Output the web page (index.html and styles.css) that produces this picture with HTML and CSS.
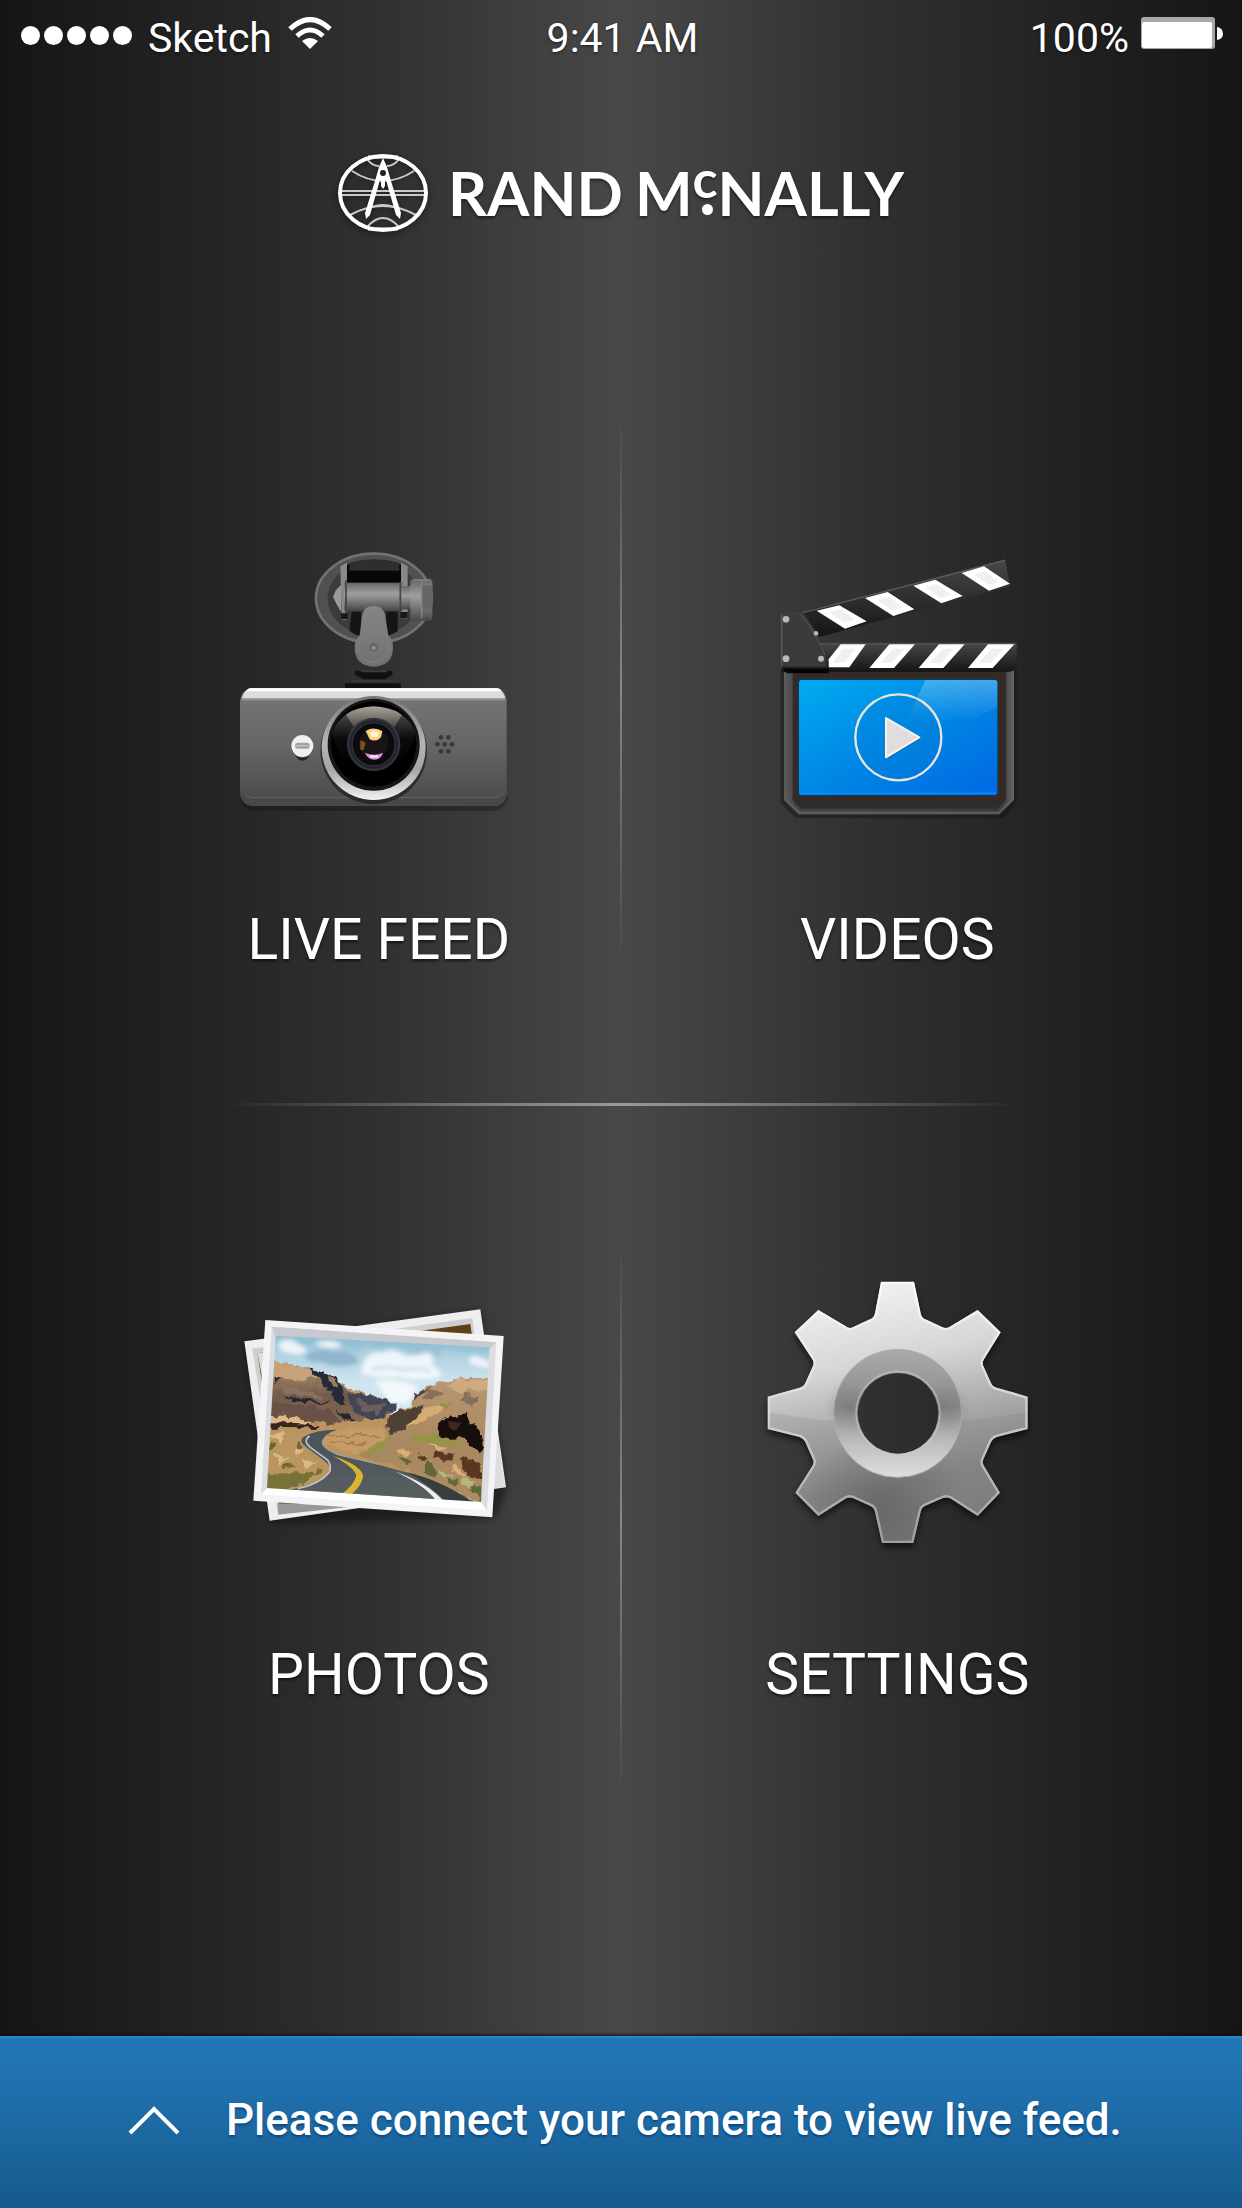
FILE: index.html
```html
<!DOCTYPE html>
<html lang="en">
<head>
    <meta charset="UTF-8">
    <meta name="viewport" content="width=device-width, initial-scale=1.0">
    <title>Rand McNally Dash Cam</title>
    <link rel="stylesheet" href="styles.css">
</head>
<body>
    <div class="status-bar">
        <div class="carrier">
            <div class="signal">
                <span></span><span></span><span></span><span></span><span></span>
            </div>
            <span>Sketch</span>
            <svg class="wifi" viewBox="0 0 44 32" aria-hidden="true">
                <path d="M2 12 Q22 -7 42 12" fill="none" stroke="#fff" stroke-width="5"/>
                <path d="M9 19 Q22 7 35 19" fill="none" stroke="#fff" stroke-width="5"/>
                <path d="M14 24 Q22 18 30 24 L22 32 Z" fill="#fff"/>
            </svg>
        </div>
        <div class="time">9:41 AM</div>
        <div class="battery">
            <span>100%</span>
            <svg viewBox="0 0 84 34" aria-hidden="true">
                <rect x="1" y="1" width="74" height="32" rx="3" fill="#a8a8a8"/>
                <rect x="2" y="6" width="70" height="26" rx="2" fill="#fff"/>
                <path d="M77 11 Q83 12 83 18 Q83 23 77 24 Z" fill="#fff"/>
            </svg>
        </div>
    </div>

    <header class="header">
        <svg class="globe" viewBox="0 0 90 80" aria-hidden="true">
            <g fill="none" stroke="#fff">
                <ellipse cx="45" cy="40" rx="43" ry="37" stroke-width="4"/>
                <g stroke-width="2" opacity="0.75">
                    <path d="M2 38 H88 M2 42 H88"/>
                    <path d="M14 18 Q45 38 76 18"/>
                    <path d="M29 6 Q34 13 41 13 M61 6 Q56 13 49 13"/>
                    <path d="M12 62 Q45 44 78 62"/>
                    <path d="M29 74 Q45 56 61 74"/>
                    <path d="M34 54 Q45 50 56 54"/>
                </g>
                <path d="M30 4 H60 M30 76 H60" stroke-width="3"/>
            </g>
            <path d="M45 5 L49 14 L53 28 L63 60 L62 66 L58 62 L48 27 L42 27 L32 62 L28 66 L27 60 L37 28 L41 14 Z" fill="#fff"/>
            <path d="M43 25 H47 V33 L45 36 L43 33 Z" fill="#fff"/>
            <circle cx="45" cy="20" r="3" fill="#222"/>
        </svg>
        <h1 class="brand"><span>RAND</span> <span class="mc">M<span class="small-c">c</span>NALLY</span></h1>
    </header>

    <main class="menu">
        <a class="item left" href="#live">
            <svg class="icon" viewBox="9 0 930 900" aria-hidden="true">
                <defs>
                    <linearGradient id="body" x1="0" y1="0" x2="0" y2="1">
                        <stop offset="0" stop-color="#777"/>
                        <stop offset="0.5" stop-color="#656565"/>
                        <stop offset="1" stop-color="#484848"/>
                    </linearGradient>
                    <linearGradient id="barrel" x1="0" y1="0" x2="0" y2="1">
                        <stop offset="0" stop-color="#666"/>
                        <stop offset="0.4" stop-color="#a0a0a0"/>
                        <stop offset="1" stop-color="#484848"/>
                    </linearGradient>
                    <linearGradient id="arm" x1="0" y1="0" x2="0" y2="1">
                        <stop offset="0" stop-color="#858585"/>
                        <stop offset="1" stop-color="#707070"/>
                    </linearGradient>
                    <linearGradient id="bezel" x1="0" y1="0" x2="0" y2="1">
                        <stop offset="0" stop-color="#777"/>
                        <stop offset="0.45" stop-color="#b5b5b5"/>
                        <stop offset="0.7" stop-color="#a5a5a8"/>
                        <stop offset="1" stop-color="#f4f0f2"/>
                    </linearGradient>
                    <linearGradient id="glass" x1="0" y1="0" x2="0" y2="1">
                        <stop offset="0" stop-color="#aaa69a"/>
                        <stop offset="0.35" stop-color="#55534e"/>
                        <stop offset="0.6" stop-color="#111"/>
                        <stop offset="1" stop-color="#000"/>
                    </linearGradient>
                    <radialGradient id="iris">
                        <stop offset="0" stop-color="#101018"/>
                        <stop offset="0.8" stop-color="#14141a"/>
                        <stop offset="1" stop-color="#3a3c46"/>
                    </radialGradient>
                </defs>
                <!-- suction mount -->
                <ellipse cx="458" cy="205" rx="173" ry="134" fill="#505050" stroke="#727272" stroke-width="8"/>
                <ellipse cx="458" cy="205" rx="138" ry="112" fill="#3b3b3b"/>
                <path d="M375 105 Q458 78 545 105 V165 H375 Z" fill="#070707"/>
                <path d="M385 98 Q458 78 535 98 V122 H385 Z" fill="#2e2e2e"/>
                <path d="M358 108 L378 98 V270 H362 Z M540 98 L560 108 V265 H540 Z" fill="#888"/>
                <path d="M345 180 L360 165 V245 L345 220 L336 200 Z" fill="#999"/>
                <rect x="370" y="158" width="175" height="84" fill="url(#barrel)"/>
                <rect x="540" y="168" width="32" height="70" fill="url(#barrel)"/>
                <rect x="568" y="148" width="66" height="124" rx="8" fill="url(#barrel)"/>
                <path d="M600 166 H634 V238 H600 Z" fill="#666"/>
                <path d="M602 154 V264 M578 150 H628" stroke="#858585" stroke-width="4"/>
                <path d="M375 150 V255 M538 155 V255" stroke="#444" stroke-width="5"/>
                <path d="M360 250 H380 V268 H360 Z M538 246 H560 V264 H538 Z" fill="#181818"/>
                <path d="M392 245 H420 V320 Q400 314 385 302 Z M496 245 H530 V304 Q510 315 496 320 Z" fill="#151515"/>
                <path d="M422 268 Q424 228 458 228 Q492 228 494 268 L502 315 Q516 330 516 352 Q516 408 458 410 Q401 408 401 352 Q401 330 416 315 Z" fill="url(#arm)"/>
                <circle cx="458" cy="352" r="46" fill="none" stroke="#808080" stroke-width="3"/>
                <circle cx="458" cy="352" r="13" fill="#666"/>
                <circle cx="458" cy="354" r="6" fill="#919191"/>
                <path d="M402 422 H514 V434 L492 448 H428 L402 434 Z M372 460 H540 V476 H372 Z" fill="#111"/>
                <path d="M420 424 H498 M395 454 H520" stroke="#3b3b3b" stroke-width="6"/>
                <!-- camera body -->
                <path d="M56 800 Q65 845 105 843 H815 Q850 843 862 800 Z" fill="#141414" opacity="0.4"/>
                <path d="M90 474 H826 Q857 482 857 516 V790 Q850 828 818 828 H98 Q65 828 57 790 V516 Q60 480 90 474 Z" fill="url(#body)"/>
                <path d="M90 474 H826 Q850 480 853 510 H62 Q66 480 90 474 Z" fill="#ddd"/>
                <path d="M84 475 H832 Q838 476 842 484 H74 Z" fill="#fff"/>
                <path d="M62 508 H852" stroke="#8d8d8d" stroke-width="7"/>
                <path d="M57 784 Q75 802 105 802 H818 Q842 800 857 784 V795 Q850 829 818 828 H98 Q65 828 57 795 Z" fill="#484848"/>
                <path d="M72 796 Q85 804 108 803 H812 Q836 803 848 792" fill="none" stroke="#666" stroke-width="3"/>
                <circle cx="458" cy="662" r="160" fill="#141414" opacity="0.6"/>
                <circle cx="458" cy="654" r="156" fill="url(#bezel)"/>
                <circle cx="458" cy="644" r="138" fill="#161616"/>
                <circle cx="458" cy="642" r="128" fill="#000"/>
                <path d="M334 608 Q362 533 458 529 Q554 533 584 608 Q570 670 530 690 H390 Q344 670 334 608 Z" fill="url(#glass)"/>
                <path d="M334 608 Q342 570 372 550 L430 640 L390 700 Q340 680 334 608 Z M584 608 Q576 570 546 550 L490 640 L525 700 Q577 680 584 608 Z" fill="#050506" opacity="0.5"/>
                <circle cx="458" cy="643" r="80" fill="url(#iris)"/>
                <circle cx="458" cy="643" r="65" fill="#0b0b0e" stroke="#303440" stroke-width="4"/>
                <circle cx="458" cy="640" r="44" fill="#181417"/>
                <path d="M434 603 Q460 588 484 604 L480 622 Q466 638 446 628 Z" fill="#ffd27a"/>
                <path d="M446 608 Q461 600 474 608 L470 621 H452 Z" fill="#fff4cf"/>
                <path d="M418 630 L434 638 L428 660 H418 Z" fill="#805020"/>
                <path d="M432 668 Q460 680 486 668 Q480 688 460 689 Q440 688 432 668 Z" fill="#d68ae0"/>
                <path d="M446 676 H472 V683 H448 Z" fill="#ffdcff"/>
                <!-- badge and speaker -->
                <path d="M211 650 A33 33 0 0 0 277 650 Q264 692 244 692 Q224 692 211 650 Z" fill="#222"/>
                <circle cx="244" cy="648" r="33" fill="#f0f0f0"/>
                <rect x="222" y="638" width="44" height="18" rx="9" fill="#a3a3a3"/>
                <path d="M226 647 H262" stroke="#ccc" stroke-width="3"/>
                <g fill="#383838">
                    <circle cx="660" cy="622" r="7"/><circle cx="682" cy="622" r="7"/>
                    <circle cx="649" cy="643" r="7"/><circle cx="671" cy="643" r="7"/><circle cx="693" cy="643" r="7"/>
                    <circle cx="660" cy="664" r="7"/><circle cx="682" cy="664" r="7"/>
                </g>
            </svg>
            <span class="label">LIVE FEED</span>
        </a>

        <a class="item right" href="#videos">
            <svg class="icon" viewBox="-54 -30 930 900" aria-hidden="true">
                <defs>
                    <linearGradient id="screen" x1="0" y1="0" x2="1" y2="1">
                        <stop offset="0" stop-color="#00abf0"/>
                        <stop offset="0.5" stop-color="#0087e4"/>
                        <stop offset="1" stop-color="#0068e2"/>
                    </linearGradient>
                    <linearGradient id="frame" x1="0" y1="0" x2="1" y2="0">
                        <stop offset="0" stop-color="#5c5c5c"/>
                        <stop offset="0.05" stop-color="#454545"/>
                        <stop offset="0.95" stop-color="#3c3c3c"/>
                        <stop offset="1" stop-color="#666"/>
                    </linearGradient>
                    <linearGradient id="stick" x1="0" y1="0" x2="0" y2="1">
                        <stop offset="0" stop-color="#484848"/>
                        <stop offset="1" stop-color="#151515"/>
                    </linearGradient>
                    <linearGradient id="glare" x1="0" y1="0" x2="0" y2="1">
                        <stop offset="0" stop-color="#fff" stop-opacity="0.26"/>
                        <stop offset="0.5" stop-color="#fff" stop-opacity="0"/>
                    </linearGradient>
                </defs>
                <path d="M62 388 H770 V790 L730 835 H108 L62 790 Z" fill="#111" opacity="0.45"/>
                <path d="M72 385 H762 V780 L718 824 H116 L72 780 Z" fill="url(#frame)"/>
                <path d="M76 778 L118 818 H716 L758 778" fill="none" stroke="#606060" stroke-width="6"/>
                <path d="M98 395 H738 V780 L712 806 H122 L98 780 Z" fill="#2f2d2c"/>
                <rect x="104" y="404" width="624" height="378" rx="12" fill="#3d261c"/>
                <rect x="112" y="414" width="604" height="356" rx="8" fill="#12394f"/>
                <rect x="117" y="420" width="595" height="345" rx="8" fill="url(#screen)"/>
                <path d="M496 420 H705 Q712 420 712 428 V500 L380 670 Z" fill="url(#glare)"/>
                <path d="M120 760 H708" stroke="#008cff" stroke-width="5"/>
                <circle cx="415" cy="594" r="128" fill="#0077cc" fill-opacity="0.2"/>
                <circle cx="415" cy="592" r="129" fill="none" stroke="#e9e5df" stroke-width="7"/>
                <path d="M376 538 L482 596 L376 660 Z" fill="#074d92" opacity="0.5"/>
                <path d="M378 534 L478 592 L378 652 Z" fill="#dedede" stroke="#fff0e0" stroke-width="6" stroke-linejoin="round"/>
                <!-- upper stick -->
                <path d="M128 215 L735 58 L750 138 L180 290 Z" fill="url(#stick)"/>
                <path d="M128 218 L735 62" stroke="#5c5c5c" stroke-width="4"/>
                <g fill="#fff">
                    <path d="M170 212 L238 196 L320 244 L255 266 Z"/>
                    <path d="M315 174 L383 156 L463 208 L400 228 Z"/>
                    <path d="M460 137 L526 119 L608 168 L544 190 Z"/>
                    <path d="M605 99 L672 79 L750 131 L687 152 Z"/>
                </g>
                <g fill="#f0f0f0">
                    <path d="M208 216 L242 207 L284 239 L252 248 Z"/>
                    <path d="M352 180 L386 170 L430 202 L398 212 Z"/>
                    <path d="M496 142 L530 132 L574 164 L542 174 Z"/>
                    <path d="M642 103 L675 94 L718 126 L686 136 Z"/>
                </g>
                <!-- lower stick -->
                <path d="M66 308 H770 V384 Q760 396 738 396 H66 Z" fill="url(#stick)"/>
                <path d="M180 312 H768" stroke="#505050" stroke-width="4"/>
                <g fill="#fff">
                    <path d="M242 313 H317 L268 382 H206 V358 Z"/>
                    <path d="M388 313 H465 L402 384 H328 Z"/>
                    <path d="M537 313 H614 L550 384 H476 Z"/>
                    <path d="M684 313 H763 L698 384 H624 Z"/>
                </g>
                <g fill="#f0f0f0">
                    <path d="M248 326 H284 L254 368 H218 Z"/>
                    <path d="M400 326 H434 L396 368 H360 Z"/>
                    <path d="M548 326 H582 L544 368 H508 Z"/>
                    <path d="M696 326 H730 L692 368 H656 Z"/>
                </g>
                <!-- hinge plate -->
                <path d="M62 220 Q62 214 70 214 L116 217 Q140 228 198 345 V380 H62 Z" fill="#3b3b3b"/>
                <path d="M65 222 V378" stroke="#595959" stroke-width="5"/>
                <path d="M116 219 Q138 228 194 342" fill="none" stroke="#505050" stroke-width="4"/>
                <g fill="#b8b8b8">
                    <circle cx="78" cy="238" r="10"/><circle cx="78" cy="356" r="10"/>
                    <circle cx="183" cy="356" r="9"/><circle cx="168" cy="280" r="7"/>
                </g>
                <path d="M70 386 H206 V400 H80 Z" fill="#050505"/>
            </svg>
            <span class="label">VIDEOS</span>
        </a>

        <a class="item left" href="#photos">
            <svg class="icon" viewBox="-21 -75 930 900" aria-hidden="true">
                <defs>
                    <linearGradient id="sky" x1="0" y1="0" x2="0" y2="1">
                        <stop offset="0" stop-color="#94c0d4"/>
                        <stop offset="0.3" stop-color="#cfe4ee"/>
                        <stop offset="1" stop-color="#e8f3f8"/>
                    </linearGradient>
                    <linearGradient id="cliff" x1="0" y1="0" x2="0" y2="1">
                        <stop offset="0" stop-color="#bd9a72"/>
                        <stop offset="0.5" stop-color="#705a4c"/>
                        <stop offset="1" stop-color="#8a6c55"/>
                    </linearGradient>
                    <linearGradient id="hill" x1="0" y1="0" x2="0" y2="1">
                        <stop offset="0" stop-color="#b89873"/>
                        <stop offset="0.5" stop-color="#a9875f"/>
                        <stop offset="1" stop-color="#b08d62"/>
                    </linearGradient>
                    <linearGradient id="road" x1="0" y1="0" x2="0" y2="1">
                        <stop offset="0" stop-color="#48525c"/>
                        <stop offset="1" stop-color="#5b605f"/>
                    </linearGradient>
                    <clipPath id="photo"><path d="M134 137 L776 172 L750 636 L108 594 Z"/></clipPath>
                    <filter id="soft"><feGaussianBlur stdDeviation="9"/></filter>
                    <filter id="cloud"><feGaussianBlur stdDeviation="7"/></filter>
                    <filter id="rough">
                        <feTurbulence type="fractalNoise" baseFrequency="0.035" numOctaves="3" seed="4" result="noise"/>
                        <feDisplacementMap in="SourceGraphic" in2="noise" scale="30" xChannelSelector="R" yChannelSelector="G"/>
                        <feGaussianBlur stdDeviation="2"/>
                    </filter>
                    <filter id="grain"><feGaussianBlur stdDeviation="2"/></filter>
                </defs>
                <path d="M38 156 L750 60 L828 598 L790 686 L118 698 Z" fill="#000" opacity="0.4" filter="url(#soft)"/>
                <!-- print underneath -->
                <path d="M40 154 L748 58 L825 592 L116 692 Z" fill="#eee"/>
                <path d="M64 176 L724 84 L796 570 L140 668 Z" fill="#cfcfd2"/>
                <path d="M80 190 L718 102 L784 560 L145 650 Z" fill="#604018"/>
                <path d="M80 190 L600 118 L400 150 L100 300 Z" fill="#ddd"/>
                <path d="M140 640 L380 648 L142 674 Z" fill="#999"/>
                <path d="M760 430 L800 440 L822 590 L776 596 Z" fill="#ddd"/>
                <!-- top print -->
                <path d="M103 90 L818 138 L784 682 L67 632 Z" fill="#f4f4f6"/>
                <path d="M122 110 L796 157 L768 662 L90 614 Z" fill="#dcdde2"/>
                <path d="M122 110 L796 157 L776 175 L134 140 Z" fill="#c8c9ce"/>
                <path d="M90 614 L768 662 L750 636 L108 594 Z" fill="#fff"/>
                <g clip-path="url(#photo)">
                    <rect x="90" y="120" width="710" height="530" fill="url(#sky)"/>
                    <g filter="url(#cloud)">
                        <path d="M130 135 H780 V190 Q700 196 640 176 L610 210 Q550 190 500 174 Q440 180 400 165 L380 190 Q340 160 270 168 Q200 178 130 150 Z" fill="#75aecb" opacity="0.35"/>
                        <path d="M220 195 Q260 170 320 185 Q360 175 385 215 Q330 240 270 215 Q230 222 220 195 Z" fill="#8fb6cd"/>
                        <g fill="#fafcfd" opacity="0.85">
                            <path d="M145 155 Q180 140 205 164 Q235 175 220 190 Q180 200 145 178 Z"/>
                            <path d="M398 215 Q415 182 450 188 Q490 170 520 196 Q560 200 590 186 Q622 205 600 226 Q640 240 625 262 Q560 275 500 262 Q440 268 390 250 Z"/>
                            <path d="M715 205 Q735 190 755 208 L776 216 V235 Q740 230 715 220 Z"/>
                            <path d="M250 160 Q300 140 335 168 Q290 184 250 160 Z"/>
                            <path d="M430 275 Q500 262 560 290 L530 340 H480 Z"/>
                        </g>
                        <path d="M420 238 Q470 225 520 240 Q560 228 600 246" fill="none" stroke="#c4dae5" stroke-width="9"/>
                    </g>
                    <g filter="url(#rough)">
                        <!-- left mesa -->
                        <path d="M100 226 L160 220 Q210 226 235 240 L272 246 L320 262 L332 284 Q380 300 410 312 L450 322 Q488 336 495 356 L440 410 H90 Z" fill="url(#cliff)"/>
                        <path d="M114 224 Q180 218 225 238 L262 260 L210 272 L114 262 Z" fill="#c5a27a"/>
                        <path d="M235 238 L275 246 L320 262 L334 300 L340 346 L318 340 L296 304 L275 280 Z" fill="#282b37"/>
                        <path d="M290 256 L312 262 L322 296 L305 290 Z" fill="#9f7c5c"/>
                        <path d="M330 284 L376 300 L410 312 L382 318 Z" fill="#c69b6a"/>
                        <path d="M352 312 L408 314 L450 322 Q490 336 495 356 L450 385 L420 400 L380 375 L350 340 Z" fill="#424555"/>
                        <path d="M370 330 L430 346 L462 340 L440 370 L408 366 Z" fill="#6b5f5d"/>
                        <path d="M130 260 L152 266 L134 280 Z M155 318 Q240 330 300 336 L262 342 Q200 340 155 318 Z M315 355 L345 372 L380 400 L345 396 Z" fill="#222532"/>
                        <path d="M108 340 Q210 336 290 360 L330 400 H100 Z" fill="#6a5145"/>
                        <path d="M140 288 L230 300 L280 325 L160 312 Z" fill="#8b7260"/>
                        <!-- valley floor -->
                        <path d="M80 380 Q180 372 250 400 Q360 398 480 380 L620 400 V660 H80 Z" fill="#bb9561"/>
                        <path d="M100 378 Q190 370 240 398 L215 405 L98 394 Z" fill="#e0b887"/>
                        <path d="M96 398 Q170 394 228 402 L270 410 L262 418 Q180 412 96 414 Z" fill="#35251a"/>
                        <path d="M116 432 L165 426 L150 460 Z M180 470 L220 478 L200 500 Z M120 490 L170 500 L150 520 Z M208 510 L262 516 L230 530 Z" fill="#dcb884"/>
                        <path d="M90 550 L150 554 L190 546 L250 552 L268 528 L280 538 L220 580 L160 604 H88 Z" fill="#777239"/>
                        <path d="M120 450 L140 470 L116 480 Z M160 520 L188 530 L165 540 Z M200 456 L214 472 L194 470 Z" fill="#6d632f"/>
                        <path d="M274 432 Q340 414 460 420 L450 450 L380 490 L320 480 L278 456 Z" fill="#c69b66"/>
                        <path d="M290 438 Q360 430 440 438 M300 456 Q360 462 410 458" fill="none" stroke="#a27c52" stroke-width="5"/>
                        <!-- right hill -->
                        <path d="M800 268 Q700 262 672 264 Q620 282 580 292 Q550 312 540 345 Q500 362 476 376 Q460 400 462 445 L380 500 L520 540 L620 580 L800 670 Z" fill="url(#hill)"/>
                        <path d="M675 264 Q730 268 800 276 V304 L720 296 L690 310 L650 290 Z" fill="#cfaa7e"/>
                        <path d="M590 300 L640 302 L620 325 L570 330 Z M700 310 L740 320 L720 345 L690 335 Z" fill="#87705a"/>
                        <path d="M610 286 L562 318 L545 335 L550 312 Z M500 362 L580 346 Q570 380 530 402 L470 440 L466 404 Q474 374 500 362 Z" fill="#4f4034"/>
                        <path d="M590 352 L640 342 L620 370 L560 400 L520 410 Z" fill="#d4ac76"/>
                        <path d="M622 340 L658 340 L650 354 L625 352 Z" fill="#8d9545"/>
                        <path d="M618 402 Q640 375 675 378 L702 372 L712 396 L742 410 L760 470 L750 490 L700 450 L660 440 L622 444 Z" fill="#120d0b"/>
                        <path d="M650 392 L690 398 L680 416 L655 414 Z" fill="#41251a"/>
                        <path d="M540 440 L600 428 L640 450 L690 452 L680 468 L600 462 Z M390 486 L450 452 L480 434 L462 470 L440 486 Z" fill="#929543"/>
                        <path d="M620 484 L668 492 L664 512 L612 504 Z M690 500 L748 520 L752 565 L710 558 L694 530 Z M560 488 L588 500 L570 510 Z" fill="#593923"/>
                        <path d="M590 460 L650 476 L620 484 Z M668 520 L704 558 L660 548 Z M500 474 L544 486 L520 504 Z" fill="#d9b077"/>
                        <path d="M580 510 L606 520 L612 556 L578 548 Z M640 560 L690 576 L670 590 Z M510 500 L548 520 L520 526 Z M714 580 L750 590 V630 L716 606 Z" fill="#5d6a37"/>
                        <path d="M620 540 L660 554 L640 568 Z M690 560 L730 574 L710 590 Z" fill="#b1b981"/>
                    </g>
                    <!-- road -->
                    <g filter="url(#grain)">
                        <path d="M318 419 Q258 418 218 440 Q202 452 224 470 L272 506 Q302 528 298 544 Q266 584 170 600 L108 596 L750 650 Q640 572 500 540 Q400 512 330 498 Q262 474 274 450 Q284 430 318 419 Z" fill="url(#road)"/>
                        <path d="M236 438 Q214 452 238 472 L290 510 Q302 528 296 545 Q270 580 200 596" fill="none" stroke="#bfc3c7" stroke-width="5"/>
                        <path d="M276 450 Q272 472 320 494 L440 522" fill="none" stroke="#9aa3aa" stroke-width="3"/>
                        <path d="M530 548 Q620 566 720 634 L640 630 Q590 580 530 548 Z" fill="#383c3d"/>
                        <path d="M490 544 Q590 578 640 636 L616 632 Q576 582 490 544 Z" fill="#eff0ed"/>
                        <path d="M306 498 Q398 528 396 562 Q390 590 360 614 H330 Q370 586 376 556 Q370 532 306 498 Z" fill="#dcb52e"/>
                    </g>
                </g>
            </svg>
            <span class="label">PHOTOS</span>
        </a>

        <a class="item right" href="#settings">
            <svg class="icon" viewBox="-24 15 930 900" aria-hidden="true">
                <defs>
                    <linearGradient id="metal" x1="0.4" y1="0" x2="0.6" y2="1">
                        <stop offset="0" stop-color="#f2f2f2"/>
                        <stop offset="0.3" stop-color="#d6d6d6"/>
                        <stop offset="0.53" stop-color="#aaa"/>
                        <stop offset="0.75" stop-color="#888"/>
                        <stop offset="1" stop-color="#7c7c7c"/>
                    </linearGradient>
                    <linearGradient id="rim" x1="0" y1="0" x2="0" y2="1">
                        <stop offset="0" stop-color="#fff"/>
                        <stop offset="0.5" stop-color="#ddd"/>
                        <stop offset="1" stop-color="#aaa"/>
                    </linearGradient>
                    <linearGradient id="ring" x1="0" y1="0" x2="0" y2="1">
                        <stop offset="0" stop-color="#aaa"/>
                        <stop offset="0.45" stop-color="#8c8c8c"/>
                        <stop offset="0.75" stop-color="#c0c0c0"/>
                        <stop offset="1" stop-color="#dedede"/>
                    </linearGradient>
                    <radialGradient id="shade">
                        <stop offset="0" stop-color="#444" stop-opacity="0.5"/>
                        <stop offset="1" stop-color="#444" stop-opacity="0"/>
                    </radialGradient>
                    <mask id="hole">
                        <rect width="900" height="920" fill="#fff"/>
                        <circle cx="444" cy="460" r="121" fill="#000"/>
                    </mask>
                    <path id="gear" d="M393 65 H492 L512 160 Q514 174 526 178 L576 201 Q590 208 603 198 L683 150 L752 217 L702 298 Q695 309 701 320 L723 369 Q728 380 740 383 L833 410 V507 L740 531 Q728 535 723 546 L701 596 Q695 607 702 618 L750 698 L683 768 L603 716 Q590 709 577 715 L526 737 Q515 742 512 755 L490 849 H396 L375 755 Q372 742 360 737 L310 715 Q298 709 286 716 L205 768 L136 698 L187 618 Q194 607 188 596 L166 546 Q161 535 149 531 L53 507 V410 L149 383 Q161 380 166 369 L188 320 Q194 309 187 298 L134 217 L205 150 L286 198 Q298 208 310 201 L360 178 Q372 174 375 160 Z"/>
                    <clipPath id="gear-clip"><use href="#gear"/></clipPath>
                    <filter id="drop"><feGaussianBlur stdDeviation="10"/></filter>
                </defs>
                <g mask="url(#hole)">
                    <use href="#gear" transform="translate(0 12)" fill="#000" opacity="0.6" filter="url(#drop)"/>
                    <use href="#gear" fill="url(#metal)"/>
                    <g clip-path="url(#gear-clip)">
                        <path d="M50 455 Q443 530 836 455 V860 H50 Z" fill="#777" opacity="0.18"/>
                        <circle cx="400" cy="740" r="240" fill="url(#shade)" opacity="0.8"/>
                        <use href="#gear" fill="none" stroke="url(#rim)" stroke-width="14" opacity="0.8"/>
                    </g>
                    <circle cx="443" cy="460" r="192" fill="url(#ring)" stroke="#b0b0b0" stroke-width="3"/>
                    <circle cx="300" cy="440" r="80" fill="url(#shade)" opacity="0.4"/>
                    <circle cx="586" cy="440" r="80" fill="url(#shade)" opacity="0.4"/>
                    <circle cx="444" cy="460" r="126" fill="none" stroke="#ccc" stroke-width="5" opacity="0.5"/>
                </g>
            </svg>
            <span class="label">SETTINGS</span>
        </a>
    </main>

    <button class="banner" type="button">
        <svg viewBox="0 0 52 30" aria-hidden="true">
            <path d="M2 28 L26 4 L50 28" fill="none" stroke="#fff" stroke-width="4"/>
        </svg>
        <span>Please connect your camera to view live feed.</span>
    </button>
</body>
</html>
```
FILE: styles.css
```css
* {
    box-sizing: border-box;
}

body {
    margin: 0;
    min-height: 100vh;
    display: flex;
    flex-direction: column;
    font-family: Roboto, Arial, sans-serif;
    color: #fff;
    background: linear-gradient(to right, #151515, #303030 30%, #484848 50%, #303030 70%, #151515);
}

/* status bar */
.status-bar {
    display: grid;
    grid-template-columns: 1fr auto 1fr;
    align-items: center;
    height: 72px;
    padding: 4px 18px 0 21px;
    font-size: 41px;
    line-height: 48px;
    text-shadow: 0 1px 3px rgba(0, 0, 0, 0.6);
}

.carrier, .battery, .signal {
    display: flex;
    align-items: center;
}

.carrier {
    gap: 16px;
}

.signal {
    gap: 4px;
    margin-bottom: 6px;
}

.signal span {
    width: 19px;
    height: 19px;
    border-radius: 50%;
    background: #fff;
}

.wifi {
    width: 44px;
    height: 32px;
    margin-bottom: 10px;
}

.battery {
    justify-content: flex-end;
    gap: 11px;
}

.battery svg {
    width: 84px;
    height: 34px;
    margin-bottom: 10px;
}

/* logo */
.header {
    display: flex;
    justify-content: center;
    align-items: center;
    gap: 20px;
    padding: 81px 0 136px;
}

.globe {
    width: 90px;
    height: 80px;
    filter: drop-shadow(0 2px 3px rgba(0, 0, 0, 0.5));
}

.brand {
    display: flex;
    gap: 12px;
    margin: 0;
    font-family: Lato, sans-serif;
    font-size: 61px;
    font-weight: 700;
    line-height: 76px;
    text-shadow: 0 2px 3px rgba(0, 0, 0, 0.5);
}

.small-c {
    position: relative;
    top: -18px;
    font-size: 52px;
    line-height: 0;
}

.small-c::after {
    content: "";
    position: absolute;
    left: 9px;
    bottom: -6px;
    width: 11px;
    height: 11px;
    border-radius: 50%;
    background: #fff;
}

/* menu, with the fading divider lines behind it */
.menu {
    display: grid;
    grid-template-columns: 1fr 1fr;
    background:
        linear-gradient(transparent, #888 50%, transparent) 50% 41px / 2px 555px no-repeat,
        linear-gradient(transparent, #888 50%, transparent) 50% 871px / 2px 555px no-repeat,
        linear-gradient(to right, transparent, #999 50%, transparent) 50% 50% / 64% 3px no-repeat;
}

.item {
    display: flex;
    flex-direction: column;
    align-items: center;
    gap: 78px;
    padding: 161px 0 132px;
    color: #fff;
    text-decoration: none;
}

.left {
    padding-left: 11vw;
}

.right {
    padding-right: 5.5vw;
}

.icon {
    width: 310px;
    height: 300px;
}

.label {
    font-size: 57px;
    line-height: 64px;
    text-shadow: 0 2px 3px rgba(0, 0, 0, 0.6);
}

/* bottom message */
.banner {
    display: flex;
    align-items: center;
    gap: 46px;
    width: 100%;
    min-height: 172px;
    margin-top: auto;
    padding: 0 64px 6px 128px;
    border: 0;
    border-top: 2px solid #2088d0;
    background: linear-gradient(#2177b5, #1f70ad 30%, #165a8c);
    box-shadow: 0 -2px 2px rgba(30, 8, 0, 0.6);
    color: #fff;
    font-family: inherit;
    font-size: 44px;
    font-weight: 500;
    line-height: 56px;
    text-align: left;
    text-shadow: 0 2px 2px rgba(0, 50, 110, 0.6);
}

.banner svg {
    flex: none;
    width: 52px;
    height: 30px;
}
```
